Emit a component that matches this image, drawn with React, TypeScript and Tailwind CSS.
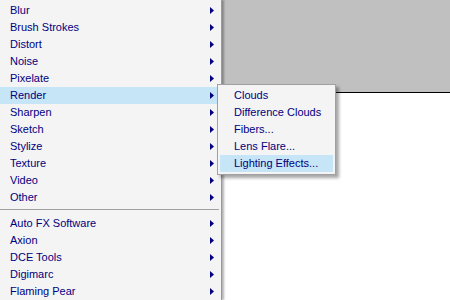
const MAIN_TOP = ["Blur", "Brush Strokes", "Distort", "Noise", "Pixelate", "Render", "Sharpen", "Sketch", "Stylize", "Texture", "Video", "Other"];
const MAIN_BOTTOM = ["Auto FX Software", "Axion", "DCE Tools", "Digimarc", "Flaming Pear"];
const RENDER_ITEMS = ["Clouds", "Difference Clouds", "Fibers...", "Lens Flare...", "Lighting Effects..."];

function Arrow() {
  return (
    <svg width="4" height="7" viewBox="0 0 4 7" className="absolute left-[210px] top-[5px]">
      <path d="M0 0 L4 3.5 L0 7 Z" fill="#000080" />
    </svg>
  );
}

function MenuRow({ label, active }: { label: string; active?: boolean }) {
  return (
    <div className={`relative h-[17px] pl-[10px] leading-[17px] ${active ? "bg-[#c6e5f6]" : ""}`}>
      {label}
      <Arrow />
    </div>
  );
}

export default function App() {
  return (
    <div
      className="relative flex h-[300px] w-[450px] overflow-hidden bg-white text-[11px] text-[#000080]"
      style={{ fontFamily: "'Liberation Sans', Arial, sans-serif" }}
    >
      <div className="relative z-10 w-[222px] shrink-0 border-r border-[#9a9a9a] bg-[#f4f4f4] pt-[2px] shadow-[2px_0_2px_rgba(0,0,0,0.3)]">
        {MAIN_TOP.map((label) => (
          <MenuRow key={label} label={label} active={label === "Render"} />
        ))}
        <div className="h-[9px] pt-[3px] pr-[2px]">
          <div className="border-t border-[#a0a0a0]" />
        </div>
        {MAIN_BOTTOM.map((label) => (
          <MenuRow key={label} label={label} />
        ))}
      </div>

      <div className="flex flex-1 flex-col">
        <div className="h-[93px] border-b border-black bg-[#c0c0c0]" />
        <div className="flex-1 bg-white" />
      </div>

      <div className="absolute left-[217px] top-[84px] z-20 w-[119px] border border-[#a0a0a0] bg-[#f4f4f4] p-[2px] shadow-[3px_3px_3px_rgba(0,0,0,0.35)]">
        {RENDER_ITEMS.map((label) => (
          <div
            key={label}
            className={`h-[17px] pl-[14px] leading-[17px] ${label === "Lighting Effects..." ? "bg-[#c6e5f6]" : ""}`}
          >
            {label}
          </div>
        ))}
      </div>
    </div>
  );
}
